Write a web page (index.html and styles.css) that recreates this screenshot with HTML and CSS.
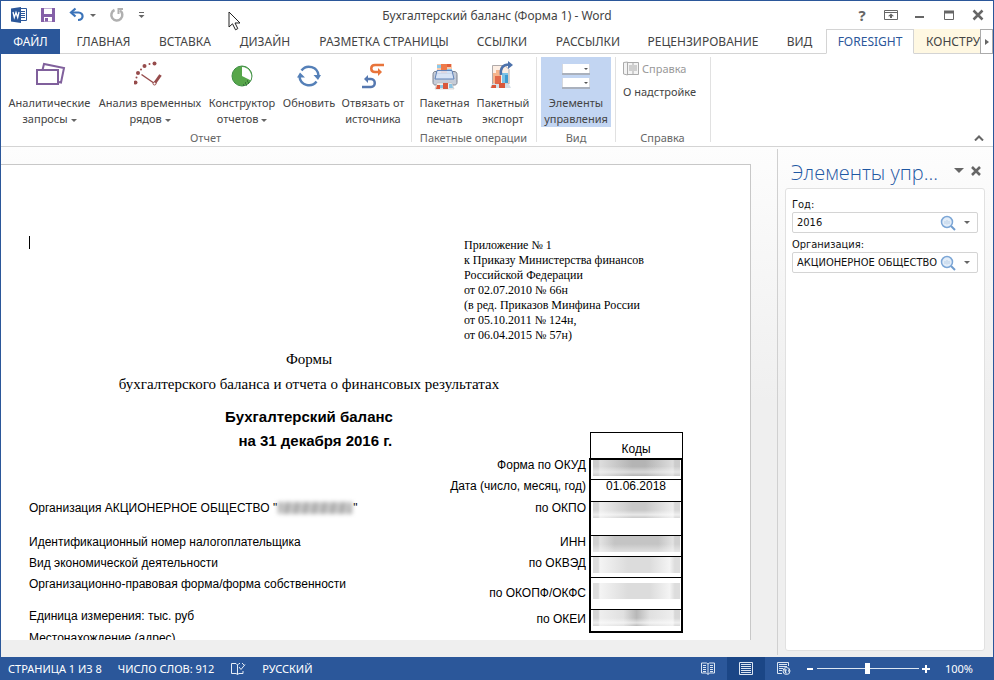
FILE: index.html
```html
<!DOCTYPE html>
<html lang="ru">
<head>
<meta charset="utf-8">
<title>Бухгалтерский баланс (Форма 1) - Word</title>
<link rel="stylesheet" href="styles.css">
</head>
<body>
<div class="window">
  <header class="titlebar">
    <div class="quick">
      <svg class="word-logo" width="18" height="18" viewBox="0 0 18 18"><path d="M10 2.500h6.500v12H10" fill="#fff" stroke="#2b579a"/><path d="M11 5.500h4M11 7.500h4M11 9.500h4M11 11.500h4" stroke="#2b579a"/><path d="M1 2.500 11 1v16L1 15.500z" fill="#2b579a"/><path d="m3 6 1.300 5.500L6 6.500l1.700 5L9 6" fill="none" stroke="#fff" stroke-width="1.300"/></svg>
      <button class="bare" aria-label="Сохранить"><svg width="16" height="16" viewBox="0 0 16 16"><path d="M1 1h14v14H1z" fill="#8560a8"/><path d="M4 1.500h8V7H4zM4 10h8v4.500H4z" fill="#fff"/><path d="M5 11h3v3.500H5z" fill="#8560a8"/></svg></button>
      <button class="bare" aria-label="Отменить"><svg width="16" height="16" viewBox="0 0 16 16"><path d="M2 5.500h7.500c5.500 0 5.500 7.500-.5 7.500" fill="none" stroke="#3b73b9" stroke-width="2.200"/><path d="M6.500 1.500 2 5.500l4.500 4" fill="none" stroke="#3b73b9" stroke-width="2.200"/></svg></button>
      <button class="bare undo-more" aria-label="Список отмены"><i class="caret"></i></button>
      <button class="bare" aria-label="Повторить"><svg width="16" height="16" viewBox="0 0 16 16"><path d="M5.500 3A5.500 5.500 0 1 0 11 3.500" fill="none" stroke="#b0b0b0" stroke-width="2.500"/><path d="M14 2H9.500v5" fill="none" stroke="#b0b0b0" stroke-width="2"/></svg></button>
      <button class="bare" aria-label="Настройка панели"><svg width="7" height="7" viewBox="0 0 7 7"><path d="M1 .5h5" stroke="#666"/><path d="M.5 3h6l-3 3z" fill="#666"/></svg></button>
    </div>
    <h1 class="caption">Бухгалтерский баланс (Форма 1) - Word</h1>
    <div class="sys">
      <button class="bare help" aria-label="Справка">?</button>
      <button class="bare" aria-label="Параметры ленты"><svg width="14" height="14" viewBox="0 0 14 14"><path d="M.5 2.500h13v9H.5zM.5 4.500h13" fill="none" stroke="#666"/><path d="M7 10V7" stroke="#666" stroke-width="2"/><path d="M4 8.200h6L7 5.500z" fill="#666"/></svg></button>
      <button class="bare" aria-label="Свернуть"><svg width="14" height="14" viewBox="0 0 14 14"><path d="M2 9h9" stroke="#666" stroke-width="2"/></svg></button>
      <button class="bare" aria-label="Развернуть"><svg width="14" height="14" viewBox="0 0 14 14"><path d="M2.500 3.500h9v8h-9z" fill="none" stroke="#666"/><path d="M2 4h10" stroke="#666" stroke-width="3"/></svg></button>
      <button class="bare" aria-label="Закрыть"><svg width="14" height="14" viewBox="0 0 14 14"><path d="m2.500 2.500 9 9m0-9-9 9" stroke="#666" stroke-width="2.500"/></svg></button>
    </div>
    <svg class="pointer" width="14" height="20" viewBox="0 0 14 20"><path d="M1 1v15l3.500-3.200 3 6 2.300-1.200-2.800-5.600H12z" fill="#fff" stroke="#222"/></svg>
  </header>

  <nav class="tabs">
    <button class="tab file">ФАЙЛ</button>
    <button class="tab">ГЛАВНАЯ</button>
    <button class="tab">ВСТАВКА</button>
    <button class="tab">ДИЗАЙН</button>
    <button class="tab">РАЗМЕТКА СТРАНИЦЫ</button>
    <button class="tab">ССЫЛКИ</button>
    <button class="tab">РАССЫЛКИ</button>
    <button class="tab">РЕЦЕНЗИРОВАНИЕ</button>
    <button class="tab">ВИД</button>
    <button class="tab active">FORESIGHT</button>
    <button class="tab context">КОНСТРУ</button>
    <button class="tab-scroll" aria-label="Прокрутить вкладки"><svg width="4" height="6" viewBox="0 0 4 6"><path d="M0 0v6l4-3z" fill="#666"/></svg></button>
  </nav>

  <section class="ribbon">
    <div class="group">
      <div class="tools report">
        <button class="tool"><svg width="32" height="32" viewBox="0 0 32 32"><path d="m8.500 9 1.500-6 20 4-3 14.500-2.500-.5" fill="none" stroke="#80609c" stroke-width="2"/><path d="M3 9h21v14H3z" fill="#fff" stroke="#80609c" stroke-width="2"/></svg><span>Аналитические<br>запросы <i class="caret"></i></span></button>
        <button class="tool"><svg width="32" height="32" viewBox="0 0 32 32"><g fill="#964b4b"><circle cx="1.500" cy="21.500" r="2"/><circle cx="2.500" cy="16.500" r="1"/><circle cx="4" cy="12" r="2"/><circle cx="7" cy="8.500" r="1"/><circle cx="10.500" cy="5" r="2"/><circle cx="15.500" cy="3" r="1"/><circle cx="20.500" cy="2.500" r="2"/></g><path d="m7.500 13.500 13 9" stroke="#964b4b" stroke-width="1.500"/><path d="m20.500 22.500 6-8.500" stroke="#964b4b" stroke-width="3"/><circle cx="20.500" cy="22.500" r="1.500" fill="#fff" stroke="#964b4b"/></svg><span>Анализ временных<br>рядов <i class="caret"></i></span></button>
        <button class="tool"><svg width="32" height="32" viewBox="0 0 32 32"><circle cx="16" cy="15" r="10" fill="#57a64a" stroke="#3f8f46"/><path d="M16 6v9l8.500 4.300A9.500 9.500 0 0 0 16 6z" fill="#fff"/><path d="M17 24h1m1-2h1m1-2h1m-2 4h1m1-2h1" stroke="#214f28"/></svg><span>Конструктор<br>отчетов <i class="caret"></i></span></button>
        <button class="tool"><svg width="32" height="32" viewBox="0 0 32 32"><g fill="none" stroke="#5580b8" stroke-width="2.500"><path d="M8.500 9.500a9.500 9.500 0 0 1 17 5"/><path d="M23.500 20.500a9.500 9.500 0 0 1-17-5"/></g><path d="M20.500 14H28L25 19zM4 16.500h8l-5-5z" fill="#5580b8"/></svg><span>Обновить</span></button>
        <button class="tool"><svg width="32" height="32" viewBox="0 0 32 32"><path d="M27 4H18c-5 0-5 7 0 7h4" fill="none" stroke="#e8743b" stroke-width="2.500"/><path d="M21 7v8l4-4z" fill="#e8743b"/><path d="M5 26h9c5 0 5-8 0-8h-4" fill="none" stroke="#5578b0" stroke-width="2.500"/><path d="M11 14v8l-4-4z" fill="#5578b0"/></svg><span>Отвязать от<br>источника</span></button>
      </div>
      <div class="group-name">Отчет</div>
    </div>
    <div class="group">
      <div class="tools batch">
        <button class="tool"><svg width="32" height="32" viewBox="0 0 32 32"><path d="M8 3h15v10H8z" fill="#f7c9ac"/><path d="M8 4h4v3H8zM18 8h5v5h-5z" fill="#8cc9ea"/><path d="M12 3h6v9h-6z" fill="#ee7a4a"/><path d="M18 3h4v3h-4z" fill="#e2603c"/><path d="M6 10.500h2v2h15v-2h2c2 0 3 1 3 3v8c0 1.500-1 2.500-2.500 2.500h-19C5 24 4 23 4 21.500v-8c0-2 1-3 2-3z" fill="#c5ccd8" stroke="#7c818d"/><path d="M8 9.500h15l2 8.500H6z" fill="#dae8fb" fill-opacity=".85" stroke="#5f82b8"/><path d="M8 22h15l2 6H6z" fill="#f4f1ee" stroke="#b5b5b5" stroke-width=".5"/><path d="M8 24h3v4H7zM14 22h5v6h-5z" fill="#d9573a"/><path d="M11 24h3v3h-3zM20 23h3l1 4h-4z" fill="#8cc3e2"/></svg><span>Пакетная<br>печать</span></button>
        <button class="tool"><svg width="32" height="32" viewBox="0 0 32 32"><path d="M5.500 4.500H18l4 4V23H5.500z" fill="#fdeee3" stroke="#b0aaaa"/><path d="M6 12h3v10H6zM9 9h5v7H9z" fill="#f6b48c"/><path d="M8 15h6v8H8z" fill="#e2694a"/><path d="M15 12h6v10h-6z" fill="#7cc2e6"/><path d="M18 14h3v8h-3z" fill="#3f9bd0"/><path d="M5 23h17l2 4H3z" fill="#d5dfe8"/><path d="M5 24h4v3H4zM12 22h6v5h-6z" fill="#d9573a"/><path d="M14 14C13 7 16 3.500 22 3.500" fill="none" stroke="#4d72ab" stroke-width="2.500"/><path d="M21 0v8l5-4z" fill="#4d72ab"/></svg><span>Пакетный<br>экспорт</span></button>
      </div>
      <div class="group-name">Пакетные операции</div>
    </div>
    <div class="group view">
      <div class="tools">
        <button class="tool pressed"><svg width="32" height="32" viewBox="0 0 32 32"><path d="M2 3h28v11H2zM2 17h28v11H2z" fill="#aab1bd"/><path d="M2.500 3h27v9h-27zM2.500 17h27v9h-27z" fill="#fff"/><path d="M24 7h4l-2 2zM24 21h4l-2 2z" fill="#555"/></svg><span>Элементы<br>управления</span></button>
      </div>
      <div class="group-name">Вид</div>
    </div>
    <div class="group help-group">
      <div class="tools">
        <button class="line-tool" disabled><svg width="16" height="16" viewBox="0 0 16 16"><path d="M.5 1.500 4.500 1v13l-4-1zM4.500 1.500h11v12h-11zM10 2v11" fill="#f3f3f3" stroke="#aaa"/><path d="M6 5h3M6 7h3M6 9h3M11 5h3M11 7h3M11 9h3" stroke="#aaa"/></svg>Справка</button>
        <button class="line-tool">О надстройке</button>
      </div>
      <div class="group-name">Справка</div>
    </div>
    <button class="bare collapse" aria-label="Свернуть ленту"><svg width="10" height="6" viewBox="0 0 10 6"><path d="m1 5.500 4-4 4 4" fill="none" stroke="#666" stroke-width="2"/></svg></button>
  </section>

  <div class="workspace">
    <main class="document">
      <article class="page">
        <div class="intro">
          <span class="text-cursor"></span>
          <p class="annex">Приложение № 1<br>к Приказу Министерства финансов<br>Российской Федерации<br>от 02.07.2010 № 66н<br>(в ред. Приказов Минфина России<br>от 05.10.2011 № 124н,<br>от 06.04.2015 № 57н)</p>
        </div>
        <p class="forms">Формы<br>бухгалтерского баланса и отчета о финансовых результатах</p>
        <h2 class="balance">Бухгалтерский баланс</h2>
        <table class="form">
          <colgroup><col><col class="col-kind"><col class="col-code"></colgroup>
          <tr class="r-head"><th class="date" colspan="2">на 31 декабря 2016 г.</th><th class="codes">Коды</th></tr>
          <tr class="r-a first"><td></td><td class="kind">Форма по ОКУД</td><td class="code"><div class="smear dark"></div></td></tr>
          <tr class="r-b"><td></td><td class="kind">Дата (число, месяц, год)</td><td class="code">01.06.2018</td></tr>
          <tr class="r-tall"><td>Организация АКЦИОНЕРНОЕ ОБЩЕСТВО "<span class="hidden-name"></span>"</td><td class="kind">по ОКПО</td><td class="code"><div class="smear"></div></td></tr>
          <tr class="r-a"><td>Идентификационный номер налогоплательщика</td><td class="kind">ИНН</td><td class="code"><div class="smear even"></div></td></tr>
          <tr class="r-a"><td>Вид экономической деятельности</td><td class="kind">по ОКВЭД</td><td class="code"><div class="smear light"></div></td></tr>
          <tr class="r-mid"><td>Организационно-правовая форма/форма собственности</td><td class="kind middle">по ОКОПФ/ОКФС</td><td class="code padded"><div class="smear light"></div></td></tr>
          <tr class="r-b last"><td>Единица измерения: тыс. руб</td><td class="kind">по ОКЕИ</td><td class="code"><div class="smear spot"></div></td></tr>
          <tr class="r-a"><td>Местонахождение (адрес)</td><td></td><td></td></tr>
        </table>
      </article>
    </main>
    <aside class="pane">
      <div class="pane-head">
        <h2>Элементы упр...</h2>
        <button class="bare" aria-label="Меню панели"><svg width="10" height="6" viewBox="0 0 10 6"><path d="M0 0h10L5 5z" fill="#666"/></svg></button>
        <button class="bare" aria-label="Закрыть панель"><svg width="10" height="10" viewBox="0 0 10 10"><path d="m1 1 8 8m0-8-8 8" stroke="#666" stroke-width="2.500"/></svg></button>
      </div>
      <div class="pane-body">
        <label for="year">Год:</label>
        <div class="combo">
          <input id="year" type="text" value="2016">
          <button class="bare" aria-label="Найти год"><svg width="16" height="16" viewBox="0 0 16 16"><path d="m11 11 4 4" stroke="#6f9bcd" stroke-width="2"/><circle cx="7" cy="7" r="5.500" fill="#e3edf8" stroke="#7ca6d6" stroke-width="1.500"/><path d="M5 9V6M7 9.500V5M9 9V6" stroke="#b9cfe7"/></svg></button>
          <button class="bare" aria-label="Список годов"><i class="caret"></i></button>
        </div>
        <label for="org">Организация:</label>
        <div class="combo">
          <input id="org" type="text" value="АКЦИОНЕРНОЕ ОБЩЕСТВО">
          <button class="bare" aria-label="Найти организацию"><svg width="16" height="16" viewBox="0 0 16 16"><path d="m11 11 4 4" stroke="#6f9bcd" stroke-width="2"/><circle cx="7" cy="7" r="5.500" fill="#e3edf8" stroke="#7ca6d6" stroke-width="1.500"/><path d="M5 9V6M7 9.500V5M9 9V6" stroke="#b9cfe7"/></svg></button>
          <button class="bare" aria-label="Список организаций"><i class="caret"></i></button>
        </div>
      </div>
    </aside>
  </div>

  <footer class="status">
    <span>СТРАНИЦА 1 ИЗ 8</span>
    <span>ЧИСЛО СЛОВ: 912</span>
    <button class="bare" aria-label="Правописание"><svg width="16" height="14" viewBox="0 0 16 14"><path d="M7.500 12.500V3L6 1.500H1.500v10H6zl1.500-1H13V9M7.500 3 9 1.500h1" fill="none" stroke="#e6edf6"/><path d="m9 5 2 2.500 4-5M12 1l2.500 2.500" fill="none" stroke="#e6edf6"/></svg></button>
    <span>РУССКИЙ</span>
    <div class="views">
      <button class="view-btn" aria-label="Режим чтения"><svg width="14" height="13" viewBox="0 0 14 13"><path d="M7 12.500V2L5.500 1H.5v10h5zl1.500-1.500h5V1h-5L7 2" fill="none" stroke="#dce6f2"/><path d="M2 3.500h3M2 5.500h3M2 7.500h3M2 9.500h3M9 3.500h3M9 5.500h3M9 7.500h3M9 9.500h3" stroke="#dce6f2"/></svg></button>
      <button class="view-btn current" aria-label="Разметка страницы"><svg width="14" height="13" viewBox="0 0 14 13"><path d="M.5.5h13v12H.5z" fill="none" stroke="#dce6f2"/><path d="M2 2.500h10M2 4.500h10M2 6.500h10M2 8.500h10M2 10.500h10" stroke="#dce6f2"/></svg></button>
      <button class="view-btn" aria-label="Веб-документ"><svg width="14" height="13" viewBox="0 0 14 13"><path d="M5 11.500H.5V.5h11V4" fill="none" stroke="#dce6f2"/><path d="M2 2.500h8M2 4.500h8M2 6.500h4M2 8.500h3" stroke="#dce6f2"/><circle cx="9.500" cy="9" r="3.500" fill="#2b579a" stroke="#dce6f2"/><path d="m7 7 3 .5-1 2 1 2.500L8 11zM11 7l2 2-1.500 1.500z" fill="#dce6f2"/></svg></button>
    </div>
    <button class="bare zoom-step" aria-label="Уменьшить"><svg width="8" height="8" viewBox="0 0 8 8"><path d="M1 4h6" stroke="#fff" stroke-width="2"/></svg></button>
    <input class="zoom" type="range" min="0" max="100" value="50" aria-label="Масштаб">
    <button class="bare zoom-step" aria-label="Увеличить"><svg width="8" height="8" viewBox="0 0 8 8"><path d="M0 4h8M4 0v8" stroke="#fff" stroke-width="2"/></svg></button>
    <span class="percent">100%</span>
  </footer>
</div>
</body>
</html>
```
FILE: styles.css
```css
* { box-sizing: border-box; }
body { margin: 0; font: 12px/16px "Noto Sans", "Open Sans", sans-serif; color: #444; }
button { font: inherit; color: inherit; background: none; border: 0; padding: 0; margin: 0; white-space: nowrap; }
svg { display: block; flex: none; }
h1, h2, p { margin: 0; }

.window { display: grid; grid-template-rows: 28px 25px 93px 1fr 23px; height: 100vh; border: 1px solid #2b579a; border-bottom: 0; background: #fff; overflow: hidden; }
.bare { display: flex; align-items: center; justify-content: center; }
.caret { display: inline-block; border: 3px solid transparent; border-top-color: #666; border-bottom: 0; vertical-align: middle; }

.titlebar { position: relative; display: grid; grid-template-columns: 1fr auto 1fr; align-items: center; }
.quick { display: flex; align-items: center; padding-left: 9px; }
.quick .word-logo { margin-right: 12px; }
.quick .bare { margin-right: 13px; }
.quick .bare + .undo-more { margin-left: -8px; }
.caption { font-size: 12px; font-weight: 400; line-height: 16px; padding-top: 2px; }
.sys { display: flex; justify-content: flex-end; gap: 15px; padding-right: 8px; }
.help { width: 14px; font-size: 15px; font-weight: 700; color: #666; }
.pointer { position: absolute; left: 227px; top: 10px; }

.tabs { display: grid; grid-template-columns: 59px 87px 76px 84px 154px 82px 90px 140px 53px 88px 1fr 13px; }
.tab { border-bottom: 1px solid #d4d4d4; overflow: hidden; padding-top: 2px; }
.file { background: #2b579a; border-color: #2b579a; color: #fff; }
.active { border: 1px solid #d4d4d4; border-bottom-color: #fff; padding-top: 1px; color: #2b579a; }
.context { background: #fff8e2; text-align: left; padding-left: 12px; }
.tab-scroll { display: flex; align-items: center; justify-content: center; border: 1px solid #ababab; }

.ribbon { display: flex; align-items: stretch; border-bottom: 1px solid #d4d4d4; padding: 3px 0 0; font-size: 11px; }
.group { display: flex; flex-direction: column; padding: 0 4px 0 3px; border-right: 1px solid #e1e1e1; margin-bottom: 4px; }
.tools { display: grid; flex: none; height: 70px; }
.report { grid-template-columns: 91px 110px 74px 60px 68px; }
.batch { grid-template-columns: 59px 58px; }
.view { padding: 0 4px; }
.view .tools { grid-template-columns: 70px; }
.tool { display: flex; flex-direction: column; align-items: center; justify-content: flex-start; gap: 2px; padding-top: 4px; }
.pressed { background: #c2d5f2; }
.group-name { text-align: center; color: #666; line-height: 16px; padding-top: 3px; }
.help-group .tools { grid-template-columns: 83px; grid-template-rows: 23px 23px; justify-items: start; padding-left: 4px; }
.line-tool { display: flex; align-items: center; gap: 3px; }
.line-tool:disabled { color: #999; }
.collapse { margin: auto 9px 5px auto; }

.workspace { display: grid; grid-template-columns: 1fr 216px; min-height: 0; background: linear-gradient(#fdfdfd, #efefef 50%); }
.document { min-height: 0; padding: 17px 26px 17px 0; }
.page { height: 100%; overflow: hidden; background: #fff; border: 1px solid #c8c8c8; border-width: 1px 1px 0 0; padding: 71px 67px 0 28px; color: #000; }
.intro { display: flex; justify-content: space-between; }
.text-cursor { width: 1px; height: 13px; background: #000; }
.annex { width: 219px; padding-top: 2px; font: 12px/15px "Liberation Serif", serif; }
.forms { width: 560px; padding-top: 4px; text-align: center; font: 15px/25px "Liberation Serif", serif; }
.balance { width: 560px; padding: 8px 0 3px; text-align: center; font: bold 15px/24px "Liberation Sans", sans-serif; }
.form { width: 100%; table-layout: fixed; border-collapse: collapse; font: 12px/12px "Liberation Sans", sans-serif; }
.col-kind { width: 150px; }
.col-code { width: 92px; }
.form td, .form th { padding: 0; vertical-align: top; white-space: nowrap; }
.form .date { font-size: 15px; line-height: 16px; padding-left: 12px; }
.form .codes { border: 1px solid #000; font-weight: 400; vertical-align: bottom; padding-bottom: 3px; }
.r-head { height: 26px; }
.r-a { height: 21px; }
.r-b { height: 22px; }
.r-tall { height: 34px; }
.r-mid { height: 32px; }
.form .kind { text-align: right; padding-right: 3px; }
.form .code { border: 1px solid #000; border-width: 1px 2px; text-align: center; }
.form .first .code { border-top-width: 2px; }
.form .last .code { border-bottom-width: 2px; }
.form .middle { vertical-align: middle; padding-bottom: 2px; }
.form .padded { padding-top: 5px; }
.form .last .kind { padding-top: 3px; }
.smear { height: 16px; margin: 0 1px 0 2px; background: linear-gradient(transparent 50%, #ffffff99 80%, transparent), linear-gradient(90deg, #d4d4d4 6%, #eee 8%, #c8c8c8 45%, #c8c8c8 60%, #eee 92%, #d8d8d8 94%); }
.dark { background: linear-gradient(transparent 40%, #ffffff80 75%, transparent), linear-gradient(90deg, #ccc 6%, #ddd 8%, #b4b4b4 45%, #b4b4b4 60%, #ddd 92%, #ccc 94%); }
.even { background: linear-gradient(transparent 50%, #ffffff80), linear-gradient(90deg, #d0d0d0 6%, #e2e2e2 8%, #c4c4c4 25%, #c4c4c4 75%, #e2e2e2 92%, #d0d0d0 94%); }
.light { background: linear-gradient(90deg, #ddd 6%, #f4f4f4 8%, #dcdcdc 40%, #dcdcdc 65%, #f4f4f4 88%, #ddd 94%); }
.spot { background: linear-gradient(transparent 50%, #ffffff99 80%, transparent), linear-gradient(90deg, #d4d4d4 6%, #eee 8%, #e0e0e0 35%, #b8b8b8 50%, #e0e0e0 65%, #eee 92%, #d8d8d8 94%); }
.hidden-name { display: inline-block; width: 74px; height: 12px; margin: 0 1px; vertical-align: middle; filter: blur(2px); background: repeating-linear-gradient(100deg, #aaa 0 3px, #ccc 4px 7px, #b4b4b4 8px 9px); }

.pane { display: grid; grid-template-rows: 39px 1fr; margin: 2px 0; padding: 0 8px 4px 7px; border-left: 1px solid #d0d0d0; }
.pane-head { display: flex; align-items: center; gap: 7px; padding: 4px 4px 0 6px; }
.pane-head h2 { flex: 1; padding-top: 4px; font: 300 20px/28px "Open Sans", "Noto Sans", sans-serif; color: #1f58a3; white-space: nowrap; }
.pane-body { background: #fff; border: 1px solid #e1e1e1; border-radius: 3px; padding: 8px 6px 8px 6px; font: 11px/15px "DejaVu Sans Condensed", "DejaVu Sans", sans-serif; color: #111; }
.pane-body label { display: block; }
.combo { display: flex; align-items: center; height: 21px; margin-bottom: 4px; border: 1px solid #d4d4d4; border-radius: 2px; padding-right: 7px; gap: 8px; }
.combo input { flex: 1; min-width: 0; border: 0; outline: 0; padding: 0 0 0 4px; font: inherit; color: inherit; background: none; }
.combo input + .bare { margin-left: -8px; }

.status { display: flex; align-items: center; background: #2b579a; color: #fff; font-size: 11px; padding: 0 20px 0 7px; }
.status > span { margin-right: 16px; white-space: nowrap; }
.status > .bare { margin-right: 16px; }
.views { display: flex; align-self: stretch; margin-left: auto; }
.view-btn { display: flex; align-items: center; justify-content: center; width: 38px; }
.current { background: #1b4686; }
.status > .zoom-step { margin: 0 3px; }
.zoom { appearance: none; width: 102px; height: 12px; margin: 0; background: linear-gradient(#dce6f2, #dce6f2) center / 100% 1px no-repeat; }
.zoom::-webkit-slider-thumb { appearance: none; width: 5px; height: 11px; background: #fff; }
.status > .percent { margin: 0 0 0 12px; }
```
